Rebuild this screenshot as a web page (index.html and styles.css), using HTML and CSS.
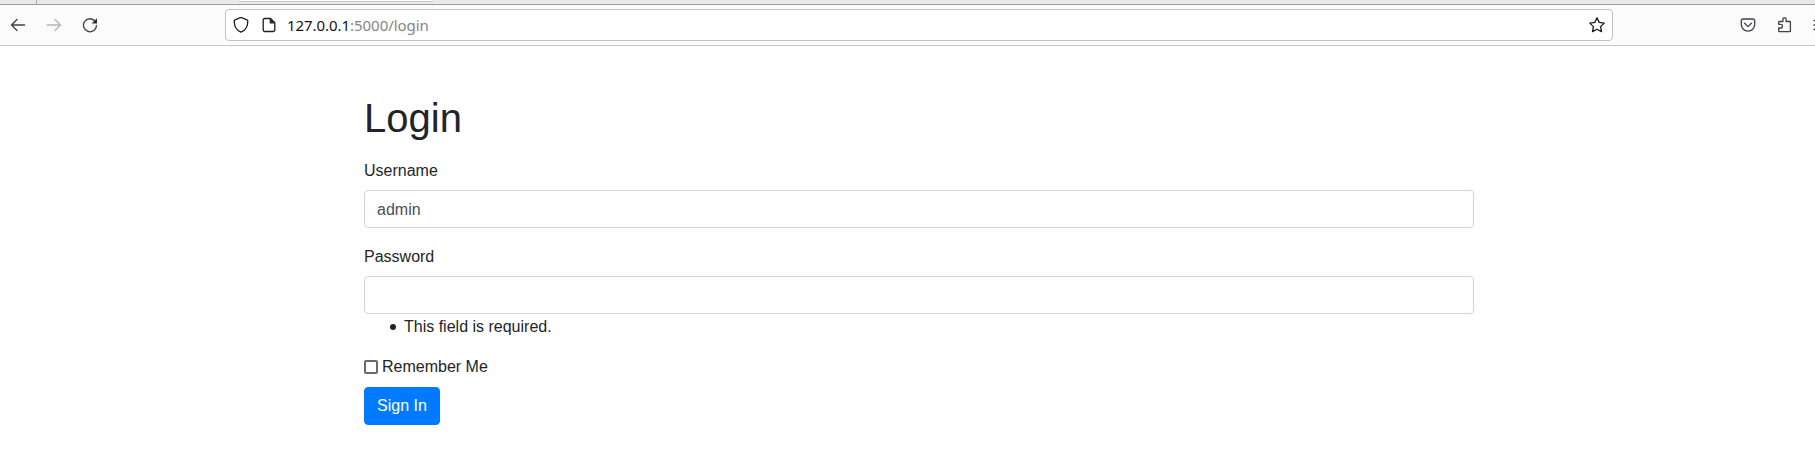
FILE: index.html
```html
<!DOCTYPE html>
<html lang="en">
<head>
<meta charset="utf-8">
<title>Login</title>
<link rel="stylesheet" href="styles.css">
</head>
<body>
<div class="tabs"><span class="tab-sep"></span><span class="active-tab"></span></div>
<header class="toolbar">
  <nav class="nav">
    <svg class="icon" viewBox="0 0 16 16"><path d="M14.500 8H1.500M7 2.500 1.500 8 7 13.500"/></svg>
    <svg class="icon disabled" viewBox="0 0 16 16"><path d="M1.200 8h13.300M9 2.500 14.500 8 9 13.500"/></svg>
    <svg class="icon" viewBox="0 0 16 16"><path d="M13.300 4.500A6.500 6.500 0 1 0 14.500 8.300"/><path class="solid" d="M15 1.200v5.300H9.700z"/></svg>
  </nav>
  <div class="urlbar">
    <svg class="icon dark" viewBox="0 0 16 16"><path d="M8 .4 14 2.900c.5.200.8.500.8 1C14.800 9 12.500 13.300 8 15.200 3.500 13.300 1.200 9 1.200 3.900c0-.5.300-.8.800-1z"/></svg>
    <svg class="icon dark page-icon" viewBox="0 0 16 16"><path d="M3.700 1.500h5.800L13.800 5.800V13a1.500 1.500 0 0 1-1.500 1.500H3.700A1.500 1.500 0 0 1 2.200 13V3A1.500 1.500 0 0 1 3.700 1.500z"/><path class="solid" d="M8.700 1v5.500h5.500z"/></svg>
    <span class="url"><b>127.0.0.1</b>:5000/login</span>
    <svg class="icon dark star" viewBox="0 0 16 16"><path d="M8 .9 10.200 5.400 15.200 6.100 11.600 9.600 12.500 14.600 8 12.200 3.500 14.600 4.400 9.600.8 6.100 5.800 5.400z"/></svg>
  </div>
  <div class="actions">
    <svg class="icon" viewBox="0 0 16 16"><path d="M3 2h10a1.700 1.700 0 0 1 1.700 1.700V7.500a6.700 6.700 0 0 1-13.400 0V3.700A1.700 1.700 0 0 1 3 2zM4.600 6.300 8 9.600l3.400-3.300"/></svg>
    <svg class="icon" viewBox="0 0 16 16"><path d="M2.700 7.300V5.200a.7.700 0 0 1 .7-.7H6.900V2.300a1.600 1.600 0 0 1 3.200 0V4.500h3.600a.7.700 0 0 1 .7.700V14a.7.700 0 0 1-.7.700H3.400a.7.700 0 0 1-.7-.7V11H4.600a1.800 1.800 0 0 0 0-3.700z"/></svg>
    <svg class="icon menu" viewBox="0 0 16 16"><path d="M1 3.500h14M1 8h14M1 12.500h14"/></svg>
  </div>
</header>
<main class="container">
  <h1>Login</h1>
  <form>
    <div class="form-group">
      <label for="username">Username</label>
      <input class="form-control" id="username" type="text" value="admin">
    </div>
    <div class="form-group">
      <label for="password">Password</label>
      <input class="form-control" id="password" type="password">
      <ul class="errors"><li>This field is required.</li></ul>
    </div>
    <label class="remember"><input class="check" type="checkbox">Remember Me</label>
    <button class="btn" type="button">Sign In</button>
  </form>
</main>
</body>
</html>
```
FILE: styles.css
```css
*, *::before, *::after { box-sizing: border-box; }
body {
  margin: 0;
  height: 450px;
  overflow: hidden;
  background: #fff;
  color: #212529;
  font: 16px/24px "Liberation Sans", Arial, sans-serif;
}
.tabs { height: 4px; display: flex; background: #e9e9e9; }
.tab-sep { width: 37px; border-right: 1px solid #aaa; }
.active-tab {
  width: 196px;
  height: 2px;
  margin-left: 201px;
  border-bottom: 1px solid #c4c4c4;
  border-radius: 0 0 4px 4px;
  background: #fff;
}
.toolbar {
  height: 42px;
  display: flex;
  align-items: center;
  border-top: 1px solid #9c9c9c;
  border-bottom: 1px solid #c6c6c6;
  background: #fbfbfb;
  overflow: hidden;
}
.nav { flex: 0 0 225px; display: flex; gap: 20px; padding-left: 10px; }
.icon {
  flex: none;
  display: block;
  width: 16px;
  height: 16px;
  fill: none;
  stroke: #3f3f44;
  stroke-width: 1.3;
  stroke-linecap: round;
  stroke-linejoin: round;
}
.icon.disabled { stroke: #b5b5b7; }
.icon.dark { stroke: #1c1b20; }
.solid { fill: #2b2a30; stroke: none; }
.urlbar {
  flex: 0 0 1388px;
  height: 32px;
  display: flex;
  align-items: center;
  padding: 0 7px;
  border: 1px solid #c2c2c2;
  border-radius: 4px;
  background: #fff;
}
.page-icon { margin-left: 12px; }
.url {
  margin-left: 10px;
  color: #858585;
  font: 15px/20px "Noto Sans", "Open Sans", sans-serif;
  letter-spacing: -0.05px;
  white-space: nowrap;
}
.url b { color: #15141a; font-weight: 400; }
.star { margin-left: auto; }
.actions { flex: none; display: flex; gap: 20px; padding-left: 127px; }
.menu { margin-left: 1px; }
.container { width: 1110px; margin: 48px 0 0 364px; }
h1 { margin: 0 0 17px; font-size: 40px; line-height: 48px; font-weight: 400; }
.form-group { margin-bottom: 16px; }
.form-group label { display: block; margin-bottom: 7px; }
.form-group + .form-group { padding-top: 1px; }
.form-control {
  display: block;
  width: 100%;
  height: 38px;
  padding: 7px 12px 5px;
  border: 1px solid #ced4da;
  border-radius: 4px;
  background: #fff;
  color: #495057;
  font: inherit;
}
.errors { margin: 0; padding: 1px 0 0 40px; list-style: none; }
.errors li::before {
  content: "";
  float: left;
  width: 6px;
  height: 6px;
  margin: 9px 0 0 -14px;
  border-radius: 50%;
  background: #212529;
}
.remember { display: flex; align-items: center; gap: 4px; margin-bottom: 8px; }
.check {
  appearance: none;
  width: 14px;
  height: 14px;
  margin: 0;
  border: 2px solid #6a6875;
  border-radius: 2px;
  background: #fff;
}
.btn {
  display: block;
  height: 38px;
  padding: 6px 12px;
  border: 1px solid #007bff;
  border-radius: 4px;
  background: #007bff;
  color: #fff;
  font: inherit;
}
```
